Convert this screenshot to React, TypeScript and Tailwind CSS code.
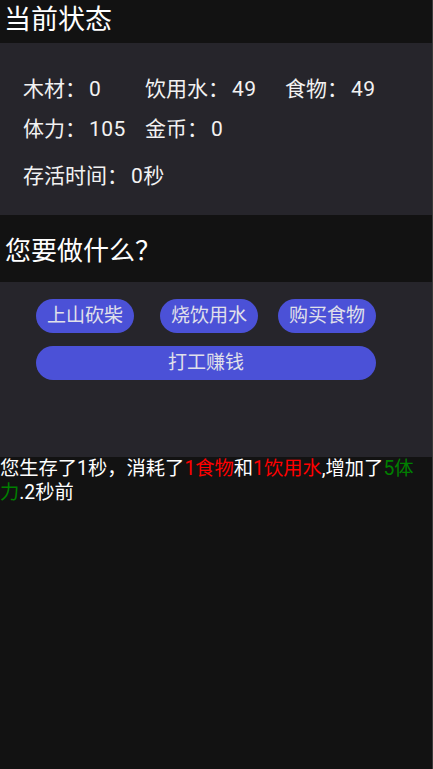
import React from "react";

export default function App() {
  const btn =
    "h-[34px] w-[98px] rounded-full bg-[#4b51d7] text-[19px] text-[#e0e0ea] flex items-center justify-center";
  const n = "pl-[3px] tracking-[0.5px]";
  return (
    <div className="min-h-screen w-full bg-[#121212] border-r border-[#3a3a3a] text-white font-['Roboto','Noto_Sans_CJK_SC',sans-serif]">
      <div className="h-[43px] pl-[4px] text-[27px] leading-[40px]">当前状态</div>
      <div className="bg-[#26252b] pt-[27px] pb-[18px] pl-[23px] text-[21px] text-[#f2f2f2]">
        <div className="flex h-[40px] items-center">
          <span className="w-[122px]">木材：<span className={n}>0</span></span>
          <span className="w-[140px]">饮用水：<span className={n}>49</span></span>
          <span>食物：<span className={n}>49</span></span>
        </div>
        <div className="flex h-[40px] items-center">
          <span className="w-[122px]">体力：<span className={n}>105</span></span>
          <span>金币：<span className={n}>0</span></span>
        </div>
        <div className="mt-[7px] flex h-[40px] items-center">存活时间：<span className={n}>0</span>秒</div>
      </div>
      <div className="h-[67px] pl-[5px] pt-[18px] text-[26px] leading-[36px]">您要做什么？</div>
      <div className="h-[175px] bg-[#26252b] pl-[36px] pt-[17px]">
        <div className="flex">
          <button className={btn}>上山砍柴</button>
          <button className={btn + " ml-[26px]"}>烧饮用水</button>
          <button className={btn + " ml-[20px]"}>购买食物</button>
        </div>
        <button className="mt-[13px] h-[34px] w-[340px] rounded-full bg-[#4b51d7] text-[19px] text-[#e0e0ea] flex items-center justify-center">
          打工赚钱
        </button>
      </div>
      <div className="text-[19.3px] leading-[24px] text-white">
        您生存了1秒，消耗了<span className="text-[#ff0000]">1食物</span>和
        <span className="text-[#ff0000]">1饮用水</span>,增加了
        <span className="text-[#008000]">5体力</span>.2秒前
      </div>
    </div>
  );
}
